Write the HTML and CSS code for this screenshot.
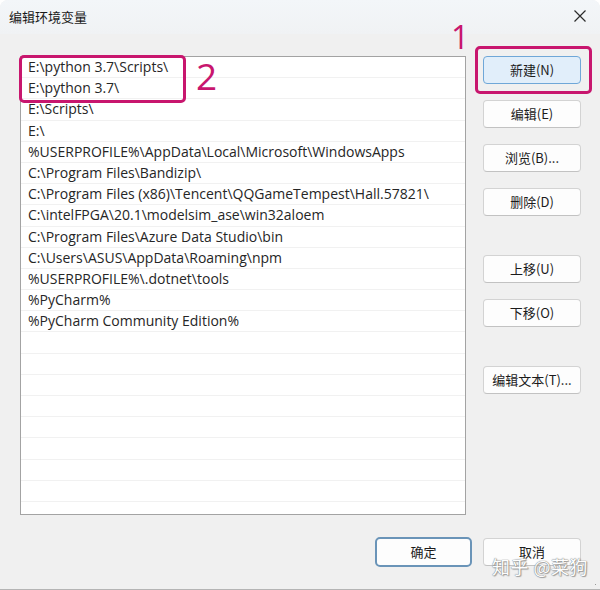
FILE: index.html
```html
<!DOCTYPE html>
<html lang="zh-CN">
<head>
<meta charset="utf-8">
<title>编辑环境变量</title>
<link rel="stylesheet" href="styles.css">
</head>
<body>
<div class="window">
  <div class="titlebar">
    <span class="title">编辑环境变量</span>
    <svg class="close" width="14" height="14" viewBox="0 0 14 14"><path d="M1.5 1.5 L12.5 12.5 M12.5 1.5 L1.5 12.5" stroke="#2b2b2b" stroke-width="1.2" fill="none"/></svg>
  </div>
  <div class="main">
    <div class="list">
      <div class="row">E:\python 3.7\Scripts\</div>
      <div class="row">E:\python 3.7\</div>
      <div class="row">E:\Scripts\</div>
      <div class="row">E:\</div>
      <div class="row">%USERPROFILE%\AppData\Local\Microsoft\WindowsApps</div>
      <div class="row">C:\Program Files\Bandizip\</div>
      <div class="row">C:\Program Files (x86)\Tencent\QQGameTempest\Hall.57821\</div>
      <div class="row">C:\intelFPGA\20.1\modelsim_ase\win32aloem</div>
      <div class="row">C:\Program Files\Azure Data Studio\bin</div>
      <div class="row">C:\Users\ASUS\AppData\Roaming\npm</div>
      <div class="row">%USERPROFILE%\.dotnet\tools</div>
      <div class="row">%PyCharm%</div>
      <div class="row">%PyCharm Community Edition%</div>
      <div class="row"></div>
      <div class="row"></div>
      <div class="row"></div>
      <div class="row"></div>
      <div class="row"></div>
      <div class="row"></div>
      <div class="row"></div>
      <div class="row"></div>
      <div class="row"></div>
    </div>
    <div class="side">
      <button class="btn primary">新建(N)</button>
      <button class="btn">编辑(E)</button>
      <button class="btn">浏览(B)...</button>
      <button class="btn">删除(D)</button>
      <button class="btn sep">上移(U)</button>
      <button class="btn">下移(O)</button>
      <button class="btn sep">编辑文本(T)...</button>
    </div>
  </div>
  <div class="footer">
    <button class="btn ok">确定</button>
    <button class="btn">取消</button>
  </div>

  <div class="mark box1"></div>
  <div class="mark box2"></div>
  <div class="num num1">1</div>
  <div class="num num2">2</div>
  <div class="watermark">知乎 @菜狗</div>
  <div class="grip"></div>
</div>
</body>
</html>
```
FILE: styles.css
```css
html, body {
  margin: 0;
  padding: 0;
  background: #ffffff;
}
body {
  font-family: "Open Sans", "Noto Sans CJK SC", sans-serif;
  color: #1b1b1b;
}
.window {
  position: relative;
  width: 600px;
  height: 590px;
  box-sizing: border-box;
  background: #f0f0f0;
  border-radius: 8px 8px 0 0;
  border-bottom: 1px solid #b4b4b4;
  overflow: hidden;
  display: flex;
  flex-direction: column;
}
.titlebar {
  height: 34px;
  flex: none;
  display: flex;
  align-items: center;
  justify-content: space-between;
  padding: 0 13px 0 9px;
  background: linear-gradient(#f3f6f9, #f0f2f4);
}
.title {
  font-family: "Noto Sans CJK SC", sans-serif;
  font-size: 13px;
  color: #1a1a1a;
  margin-top: -1px;
}
.close {
  margin-top: -2px;
}
.main {
  display: flex;
  padding: 22px 19px 0 20px;
  flex: none;
}
.list {
  width: 446px;
  height: 459px;
  box-sizing: border-box;
  border: 1px solid #a3a3a3;
  background: #ffffff;
  overflow: hidden;
}
.row {
  height: 21.2px;
  box-sizing: border-box;
  border-bottom: 1px solid #f1f1f1;
  padding-left: 7px;
  font-size: 14px;
  line-height: 20px;
  white-space: nowrap;
  color: #262626;
}
.side {
  margin-left: 17px;
  margin-top: 0;
  display: flex;
  flex-direction: column;
  gap: 16px;
}
.btn {
  width: 98px;
  height: 28px;
  box-sizing: border-box;
  background: #fdfdfd;
  border: 1px solid #d3d3d3;
  border-bottom-color: #c2c2c2;
  border-radius: 4px;
  font-family: "Noto Sans CJK SC", sans-serif;
  font-size: 13px;
  color: #1b1b1b;
  padding: 0;
  line-height: 26px;
}
.btn.primary {
  background: #e1eefa;
  border-color: #6fa7d8;
}
.btn.sep {
  margin-top: 23px;
}
.footer {
  display: flex;
  justify-content: flex-end;
  gap: 11px;
  padding: 23px 19px 0 0;
}
.btn.ok {
  width: 97px;
  height: 30px;
  border: 2px solid #6a94b8;
  border-radius: 5px;
  background: #fdfdfd;
  margin-top: -1px;
}
.mark {
  position: absolute;
  border: 3px solid #c8166e;
  border-radius: 5px;
  box-sizing: border-box;
}
.box1 {
  left: 475px;
  top: 46px;
  width: 117px;
  height: 48px;
}
.box2 {
  left: 19px;
  top: 55px;
  width: 167px;
  height: 48px;
}
.num {
  position: absolute;
  color: #c8166e;
  font-family: "Open Sans", sans-serif;
  font-weight: 400;
  line-height: 1;
}
.num1 {
  left: 451px;
  top: 21px;
  font-size: 32px;
}
.num2 {
  left: 196px;
  top: 57px;
  font-size: 37px;
}
.watermark {
  position: absolute;
  left: 492px;
  top: 553px;
  font-family: "Noto Sans CJK SC", sans-serif;
  font-size: 18px;
  color: #ffffff;
  letter-spacing: 0.5px;
  text-shadow: 0 0 1px #777, 0 0 1px #777, 1px 1px 1px #999;
  opacity: 0.9;
}
.grip {
  position: absolute;
  right: 2px;
  bottom: 2px;
  width: 7px;
  height: 7px;
  background:
    radial-gradient(circle, #9a9a9a 0.8px, transparent 1px) 0 0 / 3px 3px;
  clip-path: polygon(100% 0, 100% 100%, 0 100%);
}
```
